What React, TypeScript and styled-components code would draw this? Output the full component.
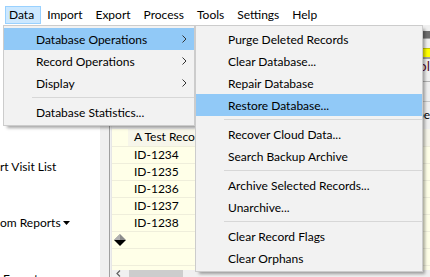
import styled, { createGlobalStyle } from "styled-components"

const GlobalStyle = createGlobalStyle`
  html, body {
    margin: 0;
    padding: 0;
  }
  body {
    width: 430px;
    height: 277px;
    overflow: hidden;
    background: #fff;
    font-family: Lato, "Liberation Sans", sans-serif;
    font-size: 12px;
    color: #000;
  }
`

const Window = styled.div`
  position: relative;
  width: 430px;
  height: 277px;
  overflow: hidden;
  display: flex;
  flex-direction: column;
  background: #fff;
`

const MenuBar = styled.div`
  height: 25px;
  flex-shrink: 0;
  display: flex;
  align-items: flex-start;
  padding: 6px 0 0 5px;
  box-sizing: border-box;
  background: #fff;
`

const BarItem = styled.div<{ $open?: boolean }>`
  height: 18px;
  box-sizing: border-box;
  line-height: 16px;
  padding: 0 6px 0 3px;
  margin-right: 2px;
  border: 1px solid ${({ $open }) => ($open ? "#99d1ff" : "transparent")};
  background: ${({ $open }) => ($open ? "#cce8ff" : "transparent")};
  white-space: nowrap;
`

const Body = styled.div`
  flex: 1;
  min-height: 0;
  display: flex;
`

const SidePanel = styled.div`
  width: 100px;
  flex-shrink: 0;
  background: #fff;
  overflow: hidden;
  display: flex;
  flex-direction: column;
  gap: 40px;
  padding-top: 134px;
  box-sizing: border-box;
`

const NavLink = styled.div`
  height: 16px;
  line-height: 16px;
  white-space: nowrap;
  display: flex;
  align-items: center;
  gap: 2px;
`

const Splitter = styled.div`
  width: 12px;
  flex-shrink: 0;
  background: #f0f0f0;
  border-right: 1px solid #e6e6e6;
  box-sizing: border-box;
  position: relative;

  &:after {
    content: '';
    position: absolute;
    top: 0;
    bottom: 0;
    right: 1px;
    width: 1px;
    background: #a0a0a0;
  }
`

const MainArea = styled.div`
  flex: 1;
  min-width: 0;
  display: flex;
  flex-direction: column;
  background: #f0f0f0;
`

const ToolArea = styled.div`
  height: 104px;
  flex-shrink: 0;
  display: flex;
  flex-direction: column;
  padding-top: 6px;
  box-sizing: border-box;
`

const TitleStrip = styled.div`
  height: 7px;
  background: #707070;
  border-bottom: 1px solid #a8a8a8;
`

const YellowStrip = styled.div`
  height: 8px;
  margin-top: 9px;
  background: #ffff00;
  border-top: 1px solid #c8c800;
  border-bottom: 2px solid #a0a0a0;
`

const ToolLabel = styled.div`
  height: 22px;
  line-height: 14px;
  text-align: right;
  color: #5a0f2a;
  font-size: 14px;
  border-bottom: 1px solid #b4b4b4;
  white-space: nowrap;
`

const ToolRow = styled.div`
  height: 19px;
  border-bottom: 1px solid #c8c8c8;
`

const ToolCaption = styled.div`
  height: 12px;
  padding-top: 7px;
  line-height: 12px;
  text-align: right;
  white-space: nowrap;
`

const Grid = styled.div`
  flex: 1;
  min-height: 0;
  overflow: hidden;
  background: #ffffe8;
  display: flex;
  flex-direction: column;
`

const GridRow = styled.div<{ $header?: boolean }>`
  height: ${({ $header }) => ($header ? 18 : 17)}px;
  flex-shrink: 0;
  display: flex;
  border-bottom: 1px solid #efeedb;
  box-sizing: border-box;
`

const RowHead = styled.div`
  width: 16px;
  flex-shrink: 0;
  display: flex;
  align-items: center;
  justify-content: center;
  background: #ffffe8;
`

const Cell = styled.div<{ $header?: boolean }>`
  flex: 1;
  padding-left: 6px;
  line-height: 16px;
  white-space: nowrap;
  background: ${({ $header }) => ($header ? "#f7f6ea" : "transparent")};
`

const HScroll = styled.div`
  height: 7px;
  flex-shrink: 0;
  display: flex;
  align-items: stretch;
  background: #f0f0f0;
  padding-left: 4px;
  gap: 8px;
`

const ScrollArrow = styled.div`
  width: 5px;
  display: flex;
  align-items: flex-start;
`

const ScrollThumb = styled.div`
  width: 54px;
  background: #cdcdcd;
`

const Dropdown = styled.div<{ $left: number; $width: number }>`
  position: absolute;
  top: 25px;
  left: ${({ $left }) => $left}px;
  width: ${({ $width }) => $width}px;
  box-sizing: border-box;
  padding: 2px 0;
  background: #f2f2f2;
  border: 1px solid #cccccc;
  box-shadow: 3px 3px 3px -1px rgba(0, 0, 0, 0.35);
  z-index: 2;
`

const MenuItem = styled.div<{ $active?: boolean }>`
  height: 22px;
  display: flex;
  align-items: center;
  justify-content: space-between;
  padding: 0 7px 0 32px;
  background: ${({ $active }) => ($active ? "#91c9f7" : "transparent")};
  white-space: nowrap;
`

const Separator = styled.div`
  height: 7px;
  margin-left: 28px;
  display: flex;
  align-items: center;

  &:after {
    content: '';
    flex: 1;
    height: 1px;
    background: #d7d7d7;
  }
`

const Chevron = () => (
  <svg width="5" height="8" viewBox="0 0 5 8">
    <path d="M0.5 0.5 L4 4 L0.5 7.5" fill="none" stroke="#333" strokeWidth="1" />
  </svg>
)

const DropCaret = () => (
  <svg width="7" height="4" viewBox="0 0 7 4">
    <path d="M0 0 H7 L3.5 4 Z" fill="#000" />
  </svg>
)

const NewRowMarker = () => (
  <svg width="12" height="12" viewBox="0 0 12 12">
    <path d="M6 0 L12 6 L0 6 Z" fill="#8c8c8c" />
    <path d="M6 0 L0 6 L6 6 Z" fill="#b0b0b0" />
    <path d="M0 6 L12 6 L6 12 Z" fill="#000" />
  </svg>
)

const LeftArrow = () => (
  <svg width="5" height="7" viewBox="0 0 5 7">
    <path d="M4 0.5 L1 3.5 L4 6.5" fill="none" stroke="#606060" strokeWidth="1.2" />
  </svg>
)

const barItems = ["Data", "Import", "Export", "Process", "Tools", "Settings", "Help"]
const records = ["ID-1234", "ID-1235", "ID-1236", "ID-1237", "ID-1238"]

export default function App() {
  return (
    <>
      <GlobalStyle />
      <Window>
        <MenuBar>
          {barItems.map((name) => (
            <BarItem key={name} $open={name === "Data"}>
              {name}
            </BarItem>
          ))}
        </MenuBar>

        <Body>
          <SidePanel>
            <NavLink>rt Visit List</NavLink>
            <NavLink>
              om Reports
              <DropCaret />
            </NavLink>
            <NavLink>&nbsp;Export</NavLink>
          </SidePanel>
          <Splitter />
          <MainArea>
            <ToolArea>
              <TitleStrip />
              <YellowStrip />
              <ToolLabel>Symbol</ToolLabel>
              <ToolRow />
              <ToolCaption>Type</ToolCaption>
            </ToolArea>
            <Grid>
              <GridRow $header>
                <RowHead />
                <Cell $header>A Test Record</Cell>
              </GridRow>
              {records.map((id) => (
                <GridRow key={id}>
                  <RowHead />
                  <Cell>{id}</Cell>
                </GridRow>
              ))}
              <GridRow>
                <RowHead>
                  <NewRowMarker />
                </RowHead>
                <Cell />
              </GridRow>
              <GridRow>
                <RowHead />
                <Cell />
              </GridRow>
            </Grid>
            <HScroll>
              <ScrollArrow>
                <LeftArrow />
              </ScrollArrow>
              <ScrollThumb />
            </HScroll>
          </MainArea>
        </Body>

        <Dropdown $left={3} $width={192}>
          <MenuItem $active>
            Database Operations
            <Chevron />
          </MenuItem>
          <MenuItem>
            Record Operations
            <Chevron />
          </MenuItem>
          <MenuItem>
            Display
            <Chevron />
          </MenuItem>
          <Separator />
          <MenuItem>Database Statistics...</MenuItem>
        </Dropdown>

        <Dropdown $left={195} $width={228}>
          <MenuItem>Purge Deleted Records</MenuItem>
          <MenuItem>Clear Database...</MenuItem>
          <MenuItem>Repair Database</MenuItem>
          <MenuItem $active>Restore Database...</MenuItem>
          <Separator />
          <MenuItem>Recover Cloud Data...</MenuItem>
          <MenuItem>Search Backup Archive</MenuItem>
          <Separator />
          <MenuItem>Archive Selected Records...</MenuItem>
          <MenuItem>Unarchive...</MenuItem>
          <Separator />
          <MenuItem>Clear Record Flags</MenuItem>
          <MenuItem>Clear Orphans</MenuItem>
        </Dropdown>
      </Window>
    </>
  )
}
